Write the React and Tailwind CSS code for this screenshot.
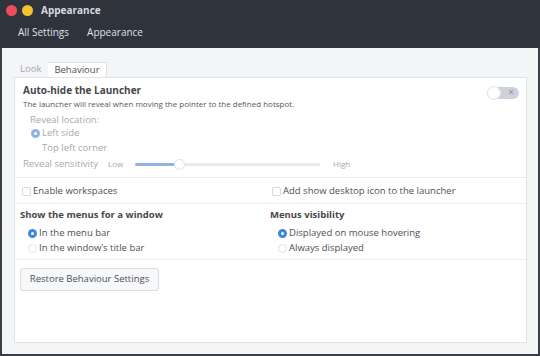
import React from 'react';

// Fenêtre "Appearance" > onglet Behaviour

const Radio = ({ checked, faded }) => (
  <span
    className={
      checked
        ? `w-[9px] h-[9px] rounded-full flex items-center justify-center shrink-0 ${faded ? 'bg-[#8fb4e3]' : 'bg-[#3f88da]'}`
        : 'w-[9px] h-[9px] rounded-full border border-[#dfe2e6] bg-white shrink-0'
    }
  >
    {checked && <span className="w-[3px] h-[3px] rounded-full bg-white"></span>}
  </span>
);

const Checkbox = () => (
  <span className="w-[9px] h-[9px] rounded-[2px] border border-[#d6d9dd] bg-white shrink-0"></span>
);

const Switch = () => (
  <div className="relative w-[32px] h-[12px] rounded-full bg-[#cdd1da] mt-[3px] mr-[7px]">
    <div className="absolute left-0 top-[-1px] w-[14px] h-[14px] rounded-full bg-white border border-[#e3e5e9]"></div>
    <span className="absolute right-[5px] top-[-2px] text-[10px] leading-[14px] text-[#8a909a]">×</span>
  </div>
);

const Divider = () => <div className="h-px bg-[#e8eaed] ml-[1px]"></div>;

const App = () => {
  return (
    <div className="w-[540px] h-[356px] flex flex-col font-['Open_Sans',sans-serif] text-[#4d4f53]">
      <div className="h-[48px] bg-[#2f333c] flex flex-col">
        <div className="h-[19px] flex items-center pl-[6px] pt-[1px]">
          <span className="w-[11px] h-[11px] rounded-full bg-[#ef4b5c]"></span>
          <span className="w-[11px] h-[11px] rounded-full bg-[#f4c130] ml-[5px]"></span>
          <span className="ml-[8px] text-[10px] font-bold text-[#d6dae0]">Appearance</span>
        </div>
        <div className="flex-1 flex items-center pl-[18px] gap-[18px] text-[10px] text-[#dfe2e6] pb-[2px]">
          <span>All Settings</span>
          <span>Appearance</span>
        </div>
      </div>

      <div className="flex-1 bg-[#f4f5f6] border-x-2 border-b-2 border-[#3b3e44] pl-[12px] pr-[11px] pt-[14px] pb-[11px] flex flex-col">
        <div className="h-[15px] flex items-stretch text-[9.5px]">
          <span className="pl-[6px] pr-[7px] flex items-center text-[#a3a6ab]">Look</span>
          <span className="px-[6px] flex items-center bg-white border-t border-r border-[#dfe2e6] text-[#4d4f53]">Behaviour</span>
        </div>

        <div className="flex-1 bg-white border border-[#dfe2e6] flex flex-col">
          <div className="pt-[6px] pb-[6px]">
            <div className="flex justify-between items-start">
              <div className="pl-[8px]">
                <div className="h-[12px] flex items-center text-[10px] leading-[12px] font-bold text-[#45474b]">Auto-hide the Launcher</div>
                <div className="h-[11px] mt-[2px] flex items-center text-[8px] leading-[11px] text-[#55575b]">
                  The launcher will reveal when moving the pointer to the defined hotspot.
                </div>
              </div>
              <Switch />
            </div>
            <div className="h-[14px] mt-[4px] pl-[15px] flex items-center text-[9.5px] text-[#a6a9ae]">Reveal location:</div>
            <div className="h-[13px] pl-[16px] flex items-center gap-[2px] text-[9.5px] text-[#a6a9ae]">
              <Radio checked faded />
              <span>Left side</span>
            </div>
            <div className="h-[14px] mt-[1px] pl-[27px] flex items-center text-[9.5px] text-[#a6a9ae]">Top left corner</div>
            <div className="h-[14px] mt-[2px] pl-[8px] flex items-center text-[9.5px] text-[#a6a9ae]">
              <span className="w-[85px]">Reveal sensitivity</span>
              <span className="text-[8px] w-[27px]">Low</span>
              <div className="relative w-[185px] h-[3px] rounded-full bg-[#e6e9ee]">
                <div className="absolute left-0 top-0 h-[3px] w-[42px] rounded-full bg-[#8fb4e3]"></div>
                <div className="absolute left-[39px] top-[-4px] w-[11px] h-[11px] rounded-full bg-white border border-[#dfe2e6]"></div>
              </div>
              <span className="text-[8px] ml-[13px]">High</span>
            </div>
          </div>

          <Divider />

          <div className="h-[25px] flex items-center text-[9.5px] pt-[2px]">
            <div className="w-[250px] pl-[7px] flex items-center gap-[2px]">
              <Checkbox />
              <span>Enable workspaces</span>
            </div>
            <div className="pl-[7px] flex items-center gap-[2px]">
              <Checkbox />
              <span>Add show desktop icon to the launcher</span>
            </div>
          </div>

          <Divider />

          <div className="flex pt-[5px] pb-[4px]">
            {[
              { title: 'Show the menus for a window', options: ['In the menu bar', 'In the window\u2019s title bar'] },
              { title: 'Menus visibility', options: ['Displayed on mouse hovering', 'Always displayed'] },
            ].map((group) => (
              <div key={group.title} className="w-[250px]">
                <div className="h-[13px] pl-[5px] flex items-center text-[9.5px] font-bold text-[#45474b]">{group.title}</div>
                {group.options.map((opt, i) => (
                  <div key={opt} className={`h-[14px] pl-[13px] flex items-center gap-[2px] text-[9.5px] ${i === 0 ? 'mt-[4px]' : 'mt-[1px]'}`}>
                    <Radio checked={i === 0} />
                    <span>{opt}</span>
                  </div>
                ))}
              </div>
            ))}
          </div>

          <Divider />

          <div className="flex pl-[5px] pt-[8px]">
            <button className="h-[23px] w-[139px] rounded-[3px] border border-[#d8dbdf] bg-[#f7f8f9] text-[9.5px] text-[#4d4f53]">
              Restore Behaviour Settings
            </button>
          </div>
        </div>
      </div>
    </div>
  );
};

export default App;
